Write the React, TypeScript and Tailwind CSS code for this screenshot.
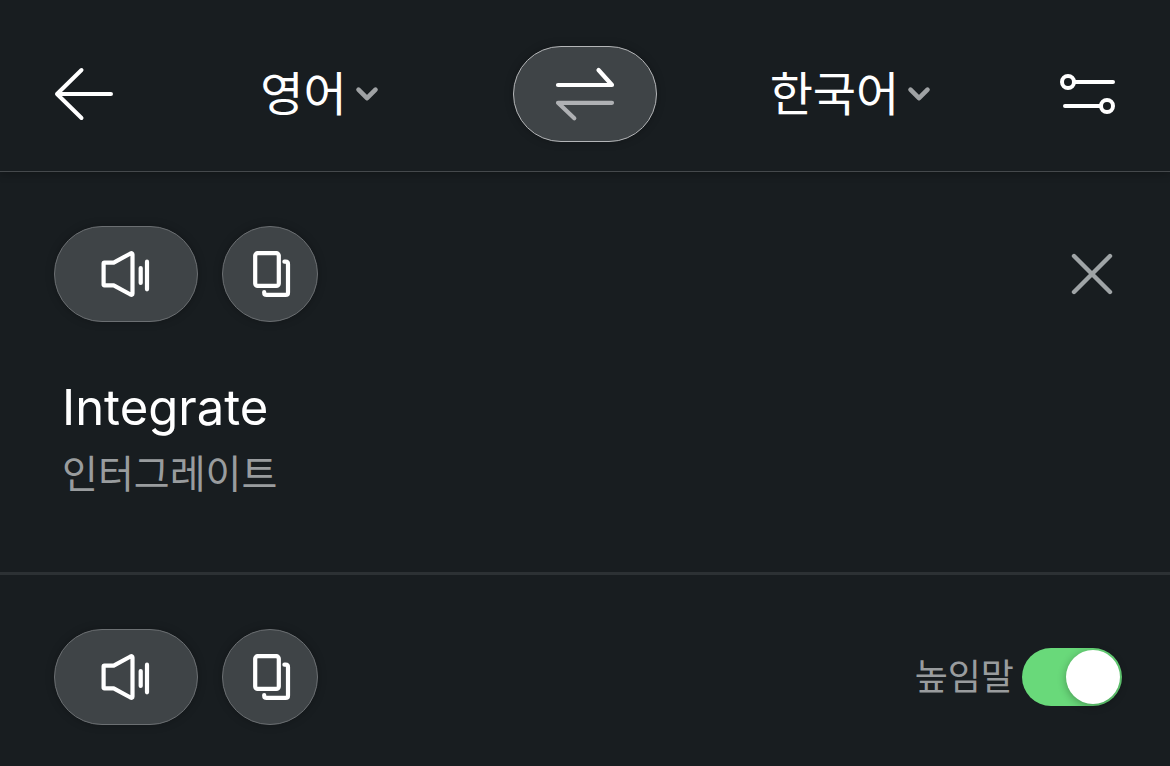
import { useState } from "react";

function BackIcon() {
  return (
    <svg width="60" height="56" viewBox="0 0 60 56" fill="none" stroke="currentColor" strokeWidth="4" strokeLinecap="round" strokeLinejoin="round" aria-hidden="true">
      <path d="M57 28H3M27.500 4L3 28l24.500 24" />
    </svg>
  );
}

function ChevronIcon() {
  return (
    <svg width="24" height="16" viewBox="0 0 24 16" fill="none" stroke="#9fa2a4" strokeWidth="4.600" strokeLinecap="round" strokeLinejoin="round" aria-hidden="true">
      <path d="M3.500 3.700L12 12.200l8.500-8.500" />
    </svg>
  );
}

function SwapIcon() {
  return (
    <svg width="64" height="56" viewBox="0 0 64 56" fill="none" strokeWidth="4.200" strokeLinecap="round" strokeLinejoin="round" aria-hidden="true">
      <path stroke="#ffffff" d="M5 19H59L45.500 4" />
      <path stroke="#afb1b4" d="M59 36.800H5L21.300 52.300" />
    </svg>
  );
}

function SettingsIcon() {
  return (
    <svg width="56" height="56" viewBox="0 0 56 56" fill="none" stroke="currentColor" strokeWidth="4" strokeLinecap="round" aria-hidden="true">
      <circle cx="8" cy="16" r="6" />
      <path d="M14 16H53M5 40H41" />
      <circle cx="47" cy="40" r="6" />
    </svg>
  );
}

function SpeakerIcon() {
  return (
    <svg width="56" height="56" viewBox="0 0 56 56" fill="none" stroke="currentColor" strokeWidth="4.200" strokeLinecap="round" strokeLinejoin="round" aria-hidden="true">
      <path d="M6.400 16.600H15.700L32.500 7.500Q34.500 6.600 34.500 8.500V47.500Q34.500 49.400 32.500 48.500L15.700 39.400H6.400Q5.600 39.400 5.600 38.400V17.600Q5.600 16.600 6.400 16.600Z" />
      <path d="M42.700 22V37M49 15.700V43.300" />
    </svg>
  );
}

function CopyIcon() {
  return (
    <svg width="56" height="56" viewBox="0 0 56 56" fill="none" stroke="currentColor" strokeWidth="4.200" strokeLinecap="round" strokeLinejoin="round" aria-hidden="true">
      <rect x="13.200" y="7.200" width="23.600" height="32.700" rx="2.500" />
      <path d="M42.400 15.700H43.600Q46 15.700 46 18.200V46.400Q46 48.900 43.600 48.900H24.700Q22.200 48.900 22.200 46.400V46" />
    </svg>
  );
}

function CloseIcon() {
  return (
    <svg width="48" height="48" viewBox="0 0 48 48" fill="none" stroke="#9fa4a6" strokeWidth="4.400" strokeLinecap="round" aria-hidden="true">
      <path d="M6 6L42 42M42 6L6 42" />
    </svg>
  );
}

type LanguageProps = {
  label: string;
  value: string;
  options: string[];
  onChange: (value: string) => void;
};

function LanguageSelect({ label, value, options, onChange }: LanguageProps) {
  return (
    <label className="flex flex-1 items-center justify-center gap-2">
      <select
        aria-label={label}
        className="field-sizing-content appearance-none bg-transparent text-[47px] leading-[72px] text-white"
        value={value}
        onChange={(e) => onChange(e.target.value)}
      >
        {options.map((o) => (
          <option key={o}>{o}</option>
        ))}
      </select>
      <ChevronIcon />
    </label>
  );
}

const pill =
  "flex h-24 items-center justify-center rounded-full border border-[#6b6f72] bg-[#3f4447] shadow-[0_0_8px_rgba(0,0,0,0.25)]";

function TextActions() {
  return (
    <div className="flex gap-6">
      <button type="button" aria-label="듣기" className={`${pill} w-36`}>
        <SpeakerIcon />
      </button>
      <button type="button" aria-label="복사" className={`${pill} w-24`}>
        <CopyIcon />
      </button>
    </div>
  );
}

export default function App() {
  const [source, setSource] = useState("영어");
  const [target, setTarget] = useState("한국어");
  const [honorific, setHonorific] = useState(true);
  const languages = ["영어", "한국어"];

  const swap = () => {
    setSource(target);
    setTarget(source);
  };

  return (
    <div className="min-h-screen bg-[#181d20] font-['Inter','Noto_Sans_CJK_KR',sans-serif] text-white">
      <header className="flex items-center border-b border-[#45494c] px-[54px] pt-[46px] pb-[29px] shadow-[0_2px_8px_rgba(0,0,0,0.25)]">
        <button type="button" aria-label="뒤로" className="flex w-18 justify-start">
          <BackIcon />
        </button>
        <LanguageSelect label="출발 언어" value={source} options={languages} onChange={setSource} />
        <button
          type="button"
          aria-label="언어 바꾸기"
          onClick={swap}
          className="flex h-24 w-36 items-center justify-center rounded-full border border-[#b4b6b8] bg-[#3f4447] shadow-[0_0_8px_rgba(0,0,0,0.25)]"
        >
          <SwapIcon />
        </button>
        <LanguageSelect label="도착 언어" value={target} options={languages} onChange={setTarget} />
        <button type="button" aria-label="설정" className="flex w-18 justify-end">
          <SettingsIcon />
        </button>
      </header>

      <main>
        <section className="border-b-3 border-[#2c3134] px-[54px] pt-[54px] pb-16">
          <div className="flex items-center justify-between">
            <TextActions />
            <button type="button" aria-label="지우기">
              <CloseIcon />
            </button>
          </div>
          <div className="px-2 pt-[54px]">
            <p className="text-[49px] leading-[64px]">Integrate</p>
            <p className="text-[39px] leading-[68px] text-[#999c9e]">인터그레이트</p>
          </div>
        </section>

        <section className="flex items-center justify-between py-[54px] pr-[48px] pl-[54px]">
          <TextActions />
          <label className="flex items-center gap-2 text-[36px] leading-[56px] text-[#999c9e]">
            높임말
            <input
              type="checkbox"
              role="switch"
              checked={honorific}
              onChange={(e) => setHonorific(e.target.checked)}
              className="flex h-[58px] w-[100px] appearance-none items-center rounded-full bg-[#4a4f52] p-[2px] before:size-[54px] before:rounded-full before:bg-white before:shadow-[0_2px_8px_rgba(0,0,0,0.3)] before:content-[''] checked:justify-end checked:bg-[#69d97a]"
            />
          </label>
        </section>
      </main>
    </div>
  );
}
